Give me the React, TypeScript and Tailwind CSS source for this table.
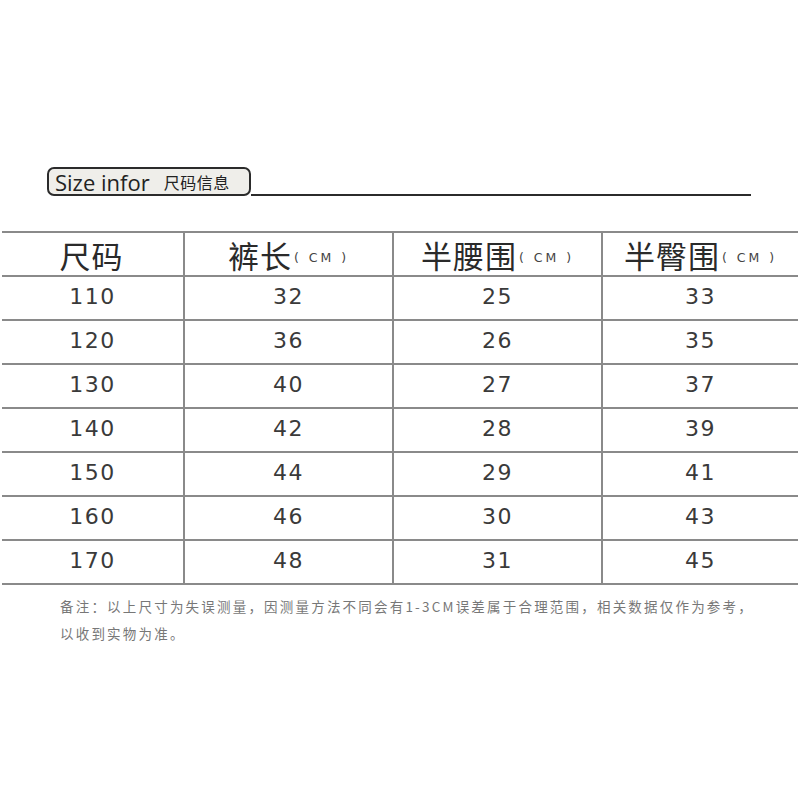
// App.tsx
const ROWS: [string, string, string, string][] = [
  ["110", "32", "25", "33"],
  ["120", "36", "26", "35"],
  ["130", "40", "27", "37"],
  ["140", "42", "28", "39"],
  ["150", "44", "29", "41"],
  ["160", "46", "30", "43"],
  ["170", "48", "31", "45"],
];

const CJK = "font-['Noto_Sans_CJK_SC',sans-serif]";
const NUM = "font-['DejaVu_Sans','Noto_Sans_CJK_SC',sans-serif]";

function HeadCell({ title, unit, first }: { title: string; unit?: boolean; first?: boolean }) {
  return (
    <div
      className={`flex h-[42px] items-center justify-center ${first ? "pr-[2px]" : "border-l-2 border-[#8a8a8a]"}`}
    >
      <span className={`${CJK} text-[31px] leading-none tracking-[1px] text-[#2a2a2a]`}>{title}</span>
      {unit && (
        <span className={`${NUM} ml-[2px] mt-2 text-[12.5px] tracking-[3px] text-[#444]`}>( CM )</span>
      )}
    </div>
  );
}

export default function App() {
  return (
    <div className="h-[800px] w-[800px] bg-white">
      <div className="pt-[167px]">
        {/* title tab */}
        <div className="ml-[47px] flex items-end">
          <div className="flex h-[29px] w-[204px] items-center rounded-[7px] border-2 border-[#2b2b2b] bg-[#efeeea] pl-[6px]">
            <span className="font-['Open_Sans',sans-serif] text-[22px] leading-none text-[#222]">Size infor</span>
            <span className={`${CJK} ml-[14px] text-[16px] leading-none tracking-[0.5px] text-[#222]`}>尺码信息</span>
          </div>
          <div className="h-[2px] w-[500px] bg-[#2b2b2b]" />
        </div>

        {/* table */}
        <div className="mx-[2px] mt-[35px] border-b-2 border-[#8a8a8a]">
          <div className="grid grid-cols-[181px_209px_209px_1fr] border-t-2 border-[#8a8a8a]">
            <HeadCell title="尺码" first />
            <HeadCell title="裤长" unit />
            <HeadCell title="半腰围" unit />
            <HeadCell title="半臀围" unit />
          </div>
          {ROWS.map((row) => (
            <div
              key={row[0]}
              className="grid grid-cols-[181px_209px_209px_1fr] border-t-2 border-[#8a8a8a]"
            >
              {row.map((v, i) => (
                <div
                  key={i}
                  className={`flex h-[42px] items-center justify-center pb-[4px] ${NUM} text-[22px] tracking-[1.5px] text-[#3a3a3a] ${
                    i === 0 ? "" : "border-l-2 border-[#8a8a8a]"
                  }`}
                >
                  {v}
                </div>
              ))}
            </div>
          ))}
        </div>

        {/* note */}
        <div className={`${CJK} ml-[60px] mt-[8px] text-[13.5px] leading-[27px] tracking-[2.2px] text-[#777]`}>
          <p className="whitespace-nowrap">备注：以上尺寸为失误测量，因测量方法不同会有1-3CM误差属于合理范围，相关数据仅作为参考，</p>
          <p>以收到实物为准。</p>
        </div>
      </div>
    </div>
  );
}
